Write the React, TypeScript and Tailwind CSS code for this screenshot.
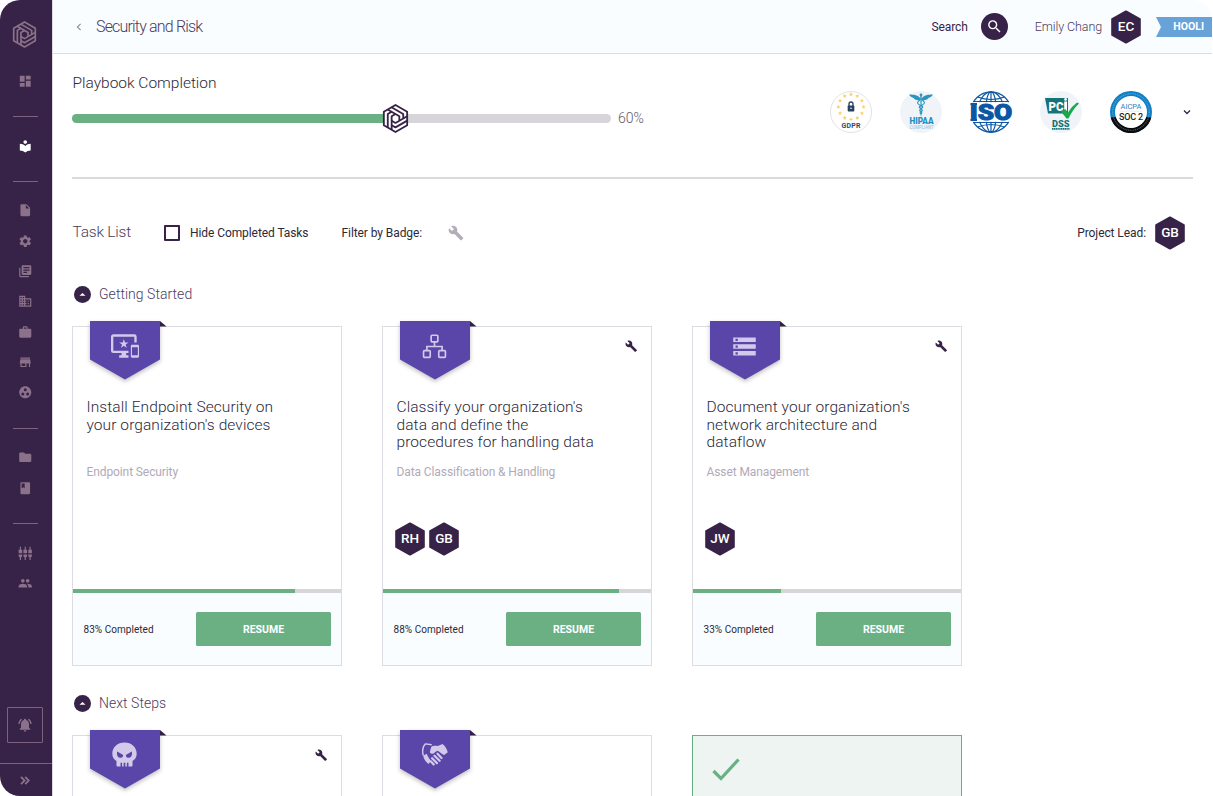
import React from "react";
import {
  MdDashboard,
  MdLocalLibrary,
  MdInsertDriveFile,
  MdSettings,
  MdLibraryBooks,
  MdBusiness,
  MdWork,
  MdStore,
  MdGroupWork,
  MdFolder,
  MdBook,
  MdSettingsInputComponent,
  MdPeople,
  MdNotificationsActive,
  MdBuild,
  MdImportantDevices,
  MdStorage,
  MdSearch,
} from "react-icons/md";

function Logo({ className, filled }: { className: string; filled?: boolean }) {
  const arm = "M-8 9.4V-4.6L-4-7M-4 11.7V-2.3L0-4.6";
  return (
    <svg viewBox="-14 -15 28 30" className={className} fill="none" stroke="currentColor" strokeWidth="1.9" strokeLinejoin="round">
      <path d="M0-14 12.1-7V7L0 14-12.1 7V-7Z" fill={filled ? "#fff" : "none"} />
      <path d={arm} />
      <path d={arm} transform="rotate(120)" />
      <path d={arm} transform="rotate(240)" />
    </svg>
  );
}

function Hex({ text }: { text: string }) {
  return (
    <div className="relative flex h-[34px] w-[30px] shrink-0 items-center justify-center">
      <svg viewBox="0 0 30 34" className="absolute inset-0 h-full w-full" fill="#362347" stroke="#362347" strokeWidth="2" strokeLinejoin="round">
        <path d="M15 1.4 28.8 9.1V24.9L15 32.6 1.2 24.9V9.1Z" />
      </svg>
      <span className="relative text-[13.5px] font-medium leading-none text-white">{text}</span>
    </div>
  );
}

function NavItem({ icon: Icon, active }: { icon: React.ElementType; active?: boolean }) {
  return (
    <div className={active ? "flex h-[30.35px] items-center justify-center text-white" : "flex h-[30.35px] items-center justify-center text-[#8b7189]"}>
      <Icon className="h-[14.5px] w-[14.5px]" />
    </div>
  );
}

function NavRule() {
  return (
    <div className="flex h-[34.5px] justify-center pt-5">
      <div className="h-px w-[25px] bg-[#7d6280]" />
    </div>
  );
}

function Sidebar() {
  return (
    <nav className="flex w-[53px] shrink-0 flex-col rounded-l-[20px] border-r border-[#dcd9e0] bg-[#362347]">
      <div className="flex h-[65.8px] justify-center pr-[3px] pt-[21px]">
        <Logo className="h-[27px] w-[25px] text-[#8b7189]" />
      </div>
      <div className="flex flex-col pr-px">
        <NavItem icon={MdDashboard} />
        <NavRule />
        <NavItem icon={MdLocalLibrary} active />
        <NavRule />
        <NavItem icon={MdInsertDriveFile} />
        <NavItem icon={MdSettings} />
        <NavItem icon={MdLibraryBooks} />
        <NavItem icon={MdBusiness} />
        <NavItem icon={MdWork} />
        <NavItem icon={MdStore} />
        <NavItem icon={MdGroupWork} />
        <NavRule />
        <NavItem icon={MdFolder} />
        <NavItem icon={MdBook} />
        <NavRule />
        <NavItem icon={MdSettingsInputComponent} />
        <NavItem icon={MdPeople} />
      </div>
      <div className="mt-auto flex h-14 justify-center pr-[2px]">
        <div className="flex h-9 w-9 items-center justify-center rounded-[1px] border border-[#7d6280] text-[#8b7189]">
          <MdNotificationsActive className="h-4 w-4" />
        </div>
      </div>
      <div className="flex h-[33px] items-center justify-center border-t border-[#7d6280] pr-[2px] text-[#8b7189]">
        <svg viewBox="0 0 10 9" className="h-[9px] w-[10px]" fill="none" stroke="currentColor" strokeWidth="1.8">
          <path d="M1 .8 4.6 4.5 1 8.2M5.2.8 8.8 4.5 5.2 8.2" />
        </svg>
      </div>
    </nav>
  );
}

function Header() {
  return (
    <header className="flex h-[54px] w-[1159px] shrink-0 items-center rounded-tr-[20px] border-b border-[#dcdde3] bg-[#f9fdff]">
      <svg viewBox="0 0 6 8" className="ml-[23px] h-[8px] w-[6px]" fill="none" stroke="#8f8796" strokeWidth="1.1">
        <path d="M4.6 .8 1.4 4 4.6 7.2" />
      </svg>
      <h1 className="ml-[14px] text-[16px] font-light tracking-[-0.82px] text-[#4b3a5c]">Security and Risk</h1>
      <span className="ml-auto pt-px text-[12px] tracking-[-0.1px] text-[#362347]">Search</span>
      <div className="ml-[13px] flex h-[27px] w-[27px] items-center justify-center rounded-full bg-[#362347] text-white">
        <MdSearch className="h-[17px] w-[17px]" />
      </div>
      <span className="ml-[27px] pt-px text-[12.5px] font-light tracking-[-0.1px] text-[#4b3a5c]">Emily Chang</span>
      <div className="ml-[9px] flex">
        <Hex text="EC" />
      </div>
      <div className="relative ml-[15px] flex h-5 w-[56px] items-center justify-end pr-[8px] pt-[2px]">
        <svg viewBox="0 0 56 20" className="absolute inset-0 h-full w-full" fill="#67a2d8">
          <path d="M0 0H56V20H0L5 10Z" />
        </svg>
        <span className="relative text-[10.5px] font-bold leading-none text-white">HOOLI</span>
      </div>
    </header>
  );
}

function Gdpr() {
  const stars = Array.from({ length: 12 }, (_, i) => i * 30);
  return (
    <svg viewBox="-21 -21 42 42" className="h-[42px] w-[42px]">
      <circle r="20.5" fill="#fff" stroke="#d9dade" strokeWidth="0.8" />
      {stars.map((a) => (
        <path
          key={a}
          transform={`translate(${12.6 * Math.sin((a * Math.PI) / 180)} ${-5 - 12.6 * Math.cos((a * Math.PI) / 180)})`}
          d="M0-2.2.65-.8 2.1-.7 1 .3 1.3 1.8 0 1-1.3 1.8-1 .3-2.1-.7-.65-.8Z"
          fill="#fbd06a"
        />
      ))}
      <path d="M-2-6V-8A2 2 0 0 1 2-8V-6" fill="none" stroke="#28415f" strokeWidth="1.3" />
      <rect x="-3.3" y="-6.5" width="6.6" height="6" rx=".7" fill="#28415f" />
      <circle cy="-3.8" r=".8" fill="#fff" />
      <rect x="-10" y="8.5" width="20" height="9" fill="#fff" />
      <text y="15.8" textAnchor="middle" fontSize="7" fontWeight="700" fill="#3b4b63" textLength="19">GDPR</text>
    </svg>
  );
}

function Hipaa() {
  return (
    <svg viewBox="-21 -21 42 42" className="h-[42px] w-[42px]">
      <circle r="21" fill="#f0f4f8" />
      <g fill="#2b95c0">
        <circle cy="-17" r="1.4" />
        <path d="M-.7-16H.7L.4 3 0 5-.4 3Z" />
        <path d="M0-13C-3-17-7-17.5-12-17.5-10.5-15-9-14.5-7.5-14-7-12.5-4-11.5-1-11.5ZM0-13C3-17 7-17.5 12-17.5 10.5-15 9-14.5 7.5-14 7-12.5 4-11.5 1-11.5Z" />
      </g>
      <path d="M-1-12C-6-9-2-7 1-6 4-4-3-2.5-1-1 1 0 1.5 1 0 2M1-12C6-9 2-7-1-6-4-4 3-2.5 1-1-1 0-1.5 1 0 2" fill="none" stroke="#2b95c0" strokeWidth="1.1" />
      <text x=".5" y="12.3" textAnchor="middle" fontSize="8.5" fontWeight="900" fill="#1f8fc4" textLength="24" lengthAdjust="spacingAndGlyphs">HIPAA</text>
      <text x=".5" y="17" textAnchor="middle" fontSize="4.6" fill="#8cc3dd" textLength="24" lengthAdjust="spacingAndGlyphs">COMPLIANT</text>
    </svg>
  );
}

function Iso() {
  return (
    <svg viewBox="-22 -21 44 42" className="h-[42px] w-[44px]">
      <g fill="none" stroke="#0b57a4" strokeWidth="1.2">
        <circle r="20.2" />
        <ellipse rx="13" ry="20.2" />
        <ellipse rx="5.5" ry="20.2" />
        <path d="M0-20V20M-13.5-15Q0-10 13.5-15M-13.5 15Q0 10 13.5 15M-18-10.5H18M-18 10.5H18" />
      </g>
      <rect x="-22" y="-9.8" width="44" height="19.6" fill="#fff" />
      <text y="8" textAnchor="middle" fontSize="22.5" fontWeight="900" fill="#0b57a4" stroke="#0b57a4" strokeWidth="1" textLength="42.5" lengthAdjust="spacingAndGlyphs">ISO</text>
      <path d="M-20.5-8H-14M-20.5 8H-14" stroke="#0b57a4" strokeWidth="2" />
    </svg>
  );
}

function Pci() {
  return (
    <svg viewBox="-21 -21 42 42" className="h-[42px] w-[42px]">
      <circle r="21" fill="#f0f4f8" />
      <path d="M-16-14H7V1.5H-13Z" fill="#157477" />
      <text x="-12.5" y="-1.5" fontSize="12" fontWeight="900" fill="#fff" textLength="15" lengthAdjust="spacingAndGlyphs">PC</text>
      <path d="M3.2-10.5H6V-1H3.2Z" fill="#fff" />
      <circle cx="4.6" cy="-12.6" r="1.4" fill="#fff" />
      <path d="M0-.5 4.2-3 7 .5Q11-6 16-9.5L18-8.5Q12-3 7.5 6.5H5.5Z" fill="#17a84c" />
      <text x="-.2" y="15.3" textAnchor="middle" fontSize="9" fontWeight="900" fill="#157477" textLength="17.5" lengthAdjust="spacingAndGlyphs">DSS</text>
      <path d="M-9 16.8H8.5" stroke="#157477" strokeWidth="1.8" strokeDasharray="1.4 .4" />
    </svg>
  );
}

function Soc() {
  return (
    <svg viewBox="-21 -21 42 42" className="h-[42px] w-[42px]">
      <circle r="21" fill="#0f7fc6" />
      <path d="M-20.3 5.5A21 21 0 0 0 20.3 5.5L15 5Q9 16 0 16T-15 5Z" fill="#0b0b0d" />
      <circle r="18.3" fill="none" stroke="#fff" strokeOpacity=".3" strokeWidth="1.2" strokeDasharray="1 .8" />
      <circle r="16" fill="#fff" />
      <text y="-2.8" textAnchor="middle" fontSize="7.5" fill="#2385c6" textLength="21">AICPA</text>
      <path d="M-11-.8H11" stroke="#ccd" strokeWidth=".5" />
      <text y="7.6" textAnchor="middle" fontSize="9" fontWeight="500" fill="#222" textLength="24">SOC 2</text>
    </svg>
  );
}

function Sitemap(props: { className?: string }) {
  return (
    <svg viewBox="0 0 24 24" className={props.className} fill="none" stroke="currentColor" strokeWidth="1.6">
      <rect x="8.8" y="1.2" width="6.4" height="6.4" rx=".8" />
      <rect x="1.5" y="16" width="6.4" height="6.4" rx=".8" />
      <rect x="16.1" y="16" width="6.4" height="6.4" rx=".8" />
      <path d="M12 8V12M4.7 16V12H19.3V16" />
    </svg>
  );
}

function Skull(props: { className?: string }) {
  return (
    <svg viewBox="0 0 24 24" className={props.className} fill="currentColor" fillRule="evenodd">
      <path d="M12 .5C5.2.5.3 5 .3 11.2.3 14.6 2 17 4.3 18.2V22.5Q4.3 23.5 5.3 23.5H8.2V19.8H9.7V23.5H11.2V19.8H12.8V23.5H14.3V19.8H15.8V23.5H18.7Q19.7 23.5 19.7 22.5V18.2C22 17 23.7 14.6 23.7 11.2 23.7 5 18.8.5 12 .5ZM5 9.2 10.7 12.4C10.6 14.5 9.5 15.2 7.9 15.2 5.4 15.2 4.2 12.2 5 9.2ZM19 9.2 13.3 12.4C13.4 14.5 14.5 15.2 16.1 15.2 18.6 15.2 19.8 12.2 19 9.2Z" />
    </svg>
  );
}

function Handshake(props: { className?: string }) {
  return (
    <svg viewBox="0 0 24 24" className={props.className}>
      <path d="M1.2 12.5C0 8 .8 4 3.2 1.7L9 2.5" fill="none" stroke="currentColor" strokeWidth="1.3" strokeLinejoin="round" />
      <path d="M1 12.8 4.3 10.8C5.5 13 6 15 8.5 17.5L6 20.3C3.5 18.5 1.8 16 1 12.8Z" fill="currentColor" />
      <path d="M8.5 4.5C11 3 12.5 3.6 14.5 3.8L19 1.8C21.5 4 23 6.5 23.8 9.5L20.5 12C17.5 11 16.5 8.5 14 8L10.5 10.5C8.5 11.5 6.6 9.8 7.5 8.2Z" fill="currentColor" />
      <path d="M14.3 10.8 18 14.8M11.5 12.6 16.3 17.3M9.3 15 13.8 19.5M8.3 18 10.8 20.8" fill="none" stroke="currentColor" strokeWidth="2" strokeLinecap="round" />
    </svg>
  );
}

function Ribbon({ children }: { children: React.ReactNode }) {
  return (
    <div className="absolute -top-[6px] left-[17px] flex h-[60px] w-[77px] text-[#d3c9ea]">
      <svg viewBox="0 0 77 60" className="absolute inset-0 h-full w-full overflow-visible">
        <path d="M70 0 76.5 5.5H70Z" fill="#362347" />
        <path d="M0 0H70V38.5L35 58.5 0 38.5Z" fill="#5a45a9" className="drop-shadow-[0_2px_2px_rgba(0,0,0,0.25)]" />
      </svg>
      <div className="relative flex h-[50px] w-[69px] items-center justify-center">{children}</div>
    </div>
  );
}

interface Task {
  title: string[];
  category: string;
  people: string[];
  percent: number;
  icon: React.ReactNode;
  wrench: boolean;
}

const started: Task[] = [
  {
    title: ["Install Endpoint Security on", "your organization's devices"],
    category: "Endpoint Security",
    people: [],
    percent: 83,
    icon: <MdImportantDevices className="h-[28px] w-[28px]" />,
    wrench: false,
  },
  {
    title: ["Classify your organization's", "data and define the", "procedures for handling data"],
    category: "Data Classification & Handling",
    people: ["RH", "GB"],
    percent: 88,
    icon: <Sitemap className="h-[25px] w-[25px]" />,
    wrench: true,
  },
  {
    title: ["Document your organization's", "network architecture and", "dataflow"],
    category: "Asset Management",
    people: ["JW"],
    percent: 33,
    icon: <MdStorage className="h-[27px] w-[27px]" />,
    wrench: true,
  },
];

function Wrench() {
  return <MdBuild className="absolute right-[14px] top-[13px] h-[12.5px] w-[12.5px] text-[#362347]" />;
}

function Card({ task }: { task: Task }) {
  return (
    <article className="relative flex h-[339.5px] w-[270px] flex-col border border-[#dedce3] bg-white">
      <Ribbon>{task.icon}</Ribbon>
      {task.wrench && <Wrench />}
      <h3 className="h-[125px] pl-[13.5px] pt-[72px] text-[15.5px] font-light leading-[17.6px] tracking-[0.08px] text-[#2c2938]">
        {task.title.map((line) => (
          <span key={line} className="block whitespace-nowrap">
            {line}
          </span>
        ))}
      </h3>
      <p className="mt-[12px] pl-[13.5px] text-[12px] leading-4 tracking-[-0.1px] text-[#b0aab8]">{task.category}</p>
      <div className="mt-[42px] flex h-[34px] gap-1 pl-3">
        {task.people.map((p) => (
          <Hex key={p} text={p} />
        ))}
      </div>
      <div className="mt-auto h-[4px] bg-[#d7d5da]">
        <div className="h-full bg-[#6ab082]" style={{ width: `${task.percent}%` }} />
      </div>
      <footer className="flex h-[72px] items-center justify-between bg-[#f9fdff] px-[10px]">
        <span className="pl-[.5px] pt-px text-[10px] tracking-[0.04px] text-[#2c2938]">{task.percent}% Completed</span>
        <button className="h-[34px] w-[135px] rounded-[1.5px] bg-[#6ab082] pt-[2px] text-[10.5px] font-bold text-white">RESUME</button>
      </footer>
    </article>
  );
}

function SectionTitle({ children }: { children: React.ReactNode }) {
  return (
    <div className="flex h-[18px] items-center gap-2 pl-[2px]">
      <svg viewBox="0 0 17 17" className="h-[17px] w-[17px]">
        <circle cx="8.5" cy="8.5" r="8.5" fill="#362347" />
        <path d="M5.5 9.8 8.5 7 11.5 9.8Z" fill="#fff" />
      </svg>
      <h2 className="text-[14px] font-light tracking-[0.03px] text-[#4b3a5c]">{children}</h2>
    </div>
  );
}

export default function App() {
  return (
    <div className="flex h-[796px] w-[1213px] overflow-hidden bg-white font-['Roboto',sans-serif]">
      <Sidebar />
      <main className="flex min-w-0 flex-1 flex-col">
        <Header />
        <div className="flex flex-col pl-[19px] pr-[20px]">
          <section className="flex h-[125px] items-start justify-between border-b-2 border-[#dadadd]">
            <div className="pt-[18px]">
              <h2 className="pl-[.5px] text-[15.5px] font-light leading-[22px] tracking-[-0.01px] text-[#2c2938]">Playbook Completion</h2>
              <div className="mt-[14px] flex h-[20px] items-center">
                <div className="relative h-[9px] w-[539px] rounded-full bg-[#d7d5da]">
                  <div className="h-full w-[60%] rounded-l-full bg-[#6ab082]" />
                  <Logo filled className="absolute -top-[10px] left-[310px] h-[29px] w-[27px] text-[#362347]" />
                </div>
                <span className="ml-[7px] text-[14px] font-light text-[#5d5a6c]">60%</span>
              </div>
            </div>
            <div className="mr-[2px] flex items-center pt-[37px]">
              <div className="flex items-center gap-7">
                <Gdpr />
                <Hipaa />
                <div className="-mx-px flex">
                  <Iso />
                </div>
                <Pci />
                <Soc />
              </div>
              <svg viewBox="0 0 8 6" className="ml-[31px] h-[6px] w-[8px]" fill="none" stroke="#362347" strokeWidth="1.3">
                <path d="M1 1.5 4 4.5 7 1.5" />
              </svg>
            </div>
          </section>
          <section className="mt-[36px] flex h-[35px] items-center pr-[8px] pt-px text-[12px] tracking-[-0.08px] text-[#2c2938]">
            <h2 className="w-[59px] whitespace-nowrap pl-[.5px] text-[15.5px] font-light tracking-[-0.22px] text-[#4b3a5c]">Task List</h2>
            <div className="ml-[33px] h-4 w-4 rounded-[1px] border-2 border-[#362347]" />
            <span className="ml-[10px]">Hide Completed Tasks</span>
            <span className="ml-[33px]">Filter by Badge:</span>
            <MdBuild className="ml-[26px] h-4 w-4 text-[#b3adb8]" />
            <span className="ml-auto mr-[9px]">Project Lead:</span>
            <Hex text="GB" />
          </section>
          <section className="mt-[35px]">
            <SectionTitle>Getting Started</SectionTitle>
            <div className="mt-[23px] flex gap-10">
              {started.map((t) => (
                <Card key={t.category} task={t} />
              ))}
            </div>
          </section>
          <section className="mt-[28.5px]">
            <SectionTitle>Next Steps</SectionTitle>
            <div className="mt-[22.5px] flex gap-10">
              <article className="relative h-[340px] w-[270px] border border-[#dedce3]">
                <Ribbon>
                  <Skull className="h-[25px] w-[25px]" />
                </Ribbon>
                <Wrench />
              </article>
              <article className="relative h-[340px] w-[270px] border border-[#dedce3]">
                <Ribbon>
                  <Handshake className="h-[26px] w-[26px]" />
                </Ribbon>
              </article>
              <article className="h-[340px] w-[270px] border border-[#6ab082] bg-[#edf4f2] pl-[19px] pt-[22px]">
                <svg viewBox="0 0 28 24" className="h-6 w-7" fill="none" stroke="#6ab082" strokeWidth="3.2">
                  <path d="M1.5 13 9 20.5 26.5 1.5" />
                </svg>
              </article>
            </div>
          </section>
        </div>
      </main>
    </div>
  );
}
